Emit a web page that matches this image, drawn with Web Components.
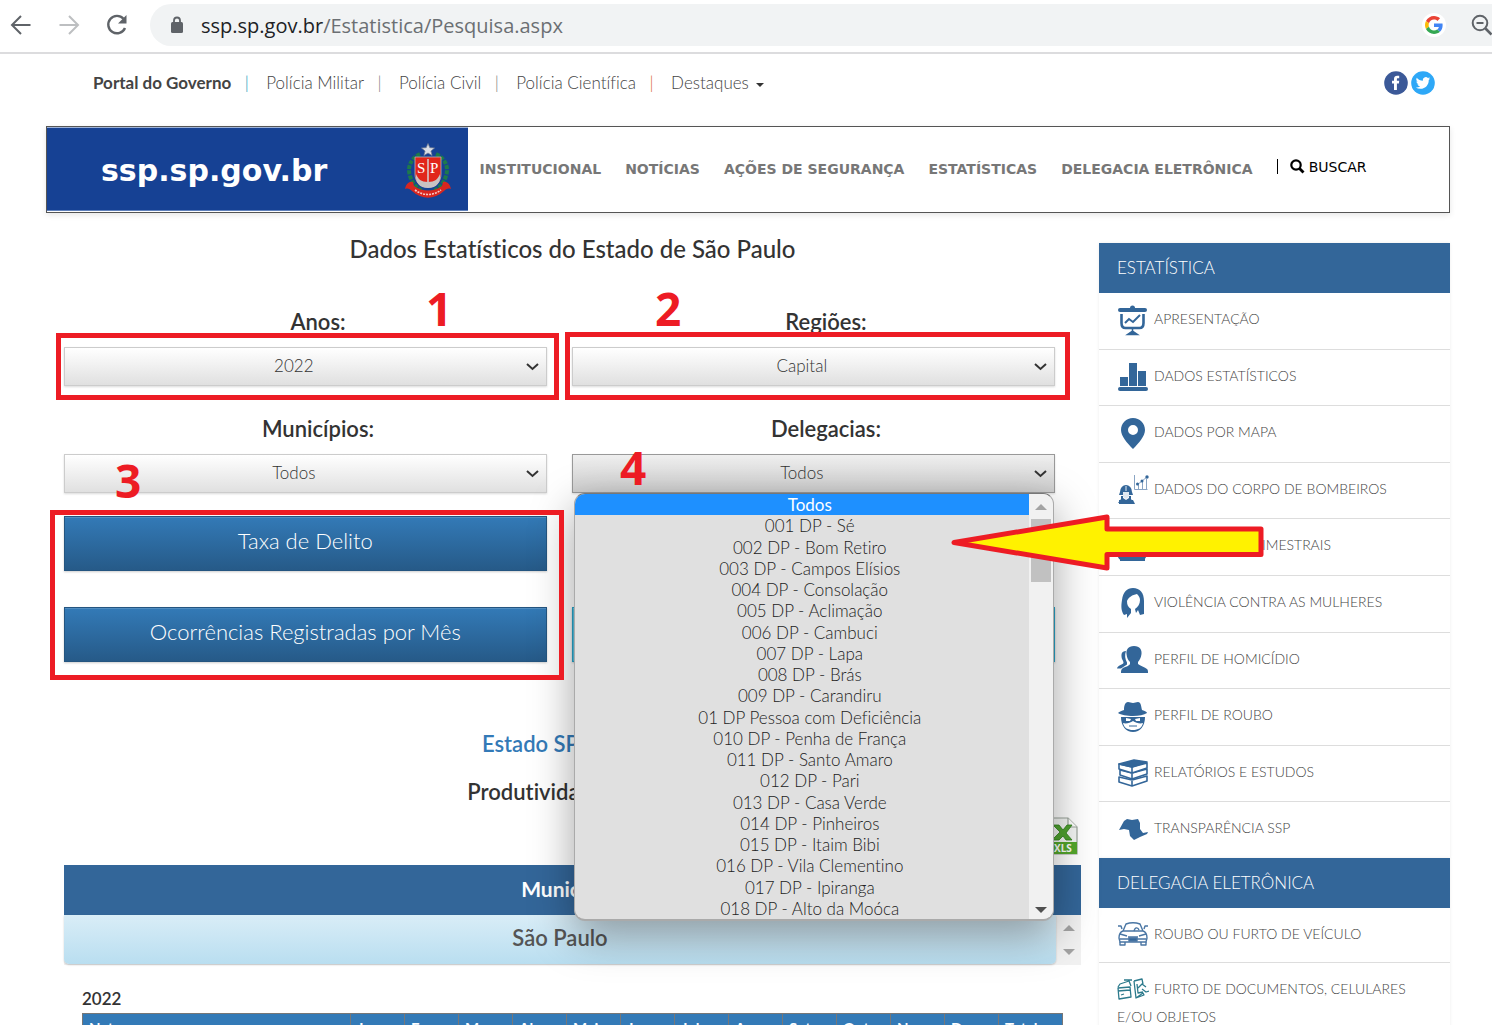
<!DOCTYPE html>
<html lang="pt-BR">
<head>
<meta charset="utf-8">
<title>Dados Estatísticos do Estado de São Paulo</title>
<style>
  html, body { margin: 0; height: 100%; overflow: hidden; background: #fff; }
  body { font-family: Lato, "Open Sans", sans-serif; color: #333; font-variant-ligatures: none; }
</style>
</head>
<body>
<ssp-page></ssp-page>
<script>
const define = (name, html, setup) => {
  const t = document.createElement('template');
  t.innerHTML = html;
  customElements.define(name, class extends HTMLElement {
    constructor() {
      super();
      this.attachShadow({ mode: 'open' }).append(t.content.cloneNode(true));
    }
    connectedCallback() { if (setup && !this.ready) { this.ready = true; setup(this, this.shadowRoot); } }
  });
};

/* Browser toolbar */
define('browser-bar', `
<style>
  :host { display: flex; align-items: center; height: 52px; border-bottom: 2px solid #dcdcde; overflow: hidden; background: #fff; }
  .nav { display: flex; flex: none; gap: 24px; padding: 0 21px 2px 9px; }
  button { border: 0; padding: 0; background: none; display: block; width: 24px; height: 24px; }
  svg { display: block; }
  .pill { flex: 1; display: flex; align-items: center; height: 42px; margin: -2px -40px 0 0; padding-right: 39px; border-radius: 21px; background: #f1f3f4; }
  .lock { flex: none; margin: 0 17px 0 20px; }
  .url { flex: 1; font: 20px/28px "Open Sans", sans-serif; color: #6b6f73; padding-top: 2px; }
  .url b { font-weight: 400; color: #202124; }
  .g { width: 24px; height: 24px; border-radius: 50%; background: #fff; display: grid; place-items: center; margin-right: 25px; }
</style>
<div class="nav">
  <button aria-label="Voltar"><svg width="24" height="24" viewBox="0 0 24 24" fill="none" stroke="#5f6368" stroke-width="2"><path d="M21.500 12H3M12 3l-9 9 9 9"/></svg></button>
  <button aria-label="Avançar"><svg width="24" height="24" viewBox="0 0 24 24" fill="none" stroke="#bdbfc1" stroke-width="2"><path d="M2.500 12H21M12 3l9 9-9 9"/></svg></button>
  <button aria-label="Recarregar"><svg width="24" height="24" viewBox="0 0 24 24"><path d="M20 15a8.700 8.700 0 1 1-1.500-9.200" fill="none" stroke="#5f6368" stroke-width="2.400"/><path d="M21.500 2v8.500H13z" fill="#5f6368"/></svg></button>
</div>
<div class="pill">
  <svg class="lock" width="14" height="18" viewBox="0 0 14 18"><rect x="1" y="6" width="12" height="11" rx="1.500" fill="#5f6368"/><path d="M4 7V4.500a3 3 0 0 1 6 0V7" fill="none" stroke="#5f6368" stroke-width="1.800"/></svg>
  <span class="url"><b>ssp.sp.gov.br</b>/Estatistica/Pesquisa.aspx</span>
  <span class="g"><svg width="18" height="18" viewBox="0 0 48 48"><path fill="#EA4335" d="M24 9.500c3.540 0 6.710 1.220 9.210 3.600l6.850-6.850C35.900 2.380 30.470 0 24 0 14.620 0 6.510 5.380 2.560 13.220l7.980 6.190C12.430 13.720 17.740 9.500 24 9.500z"/><path fill="#4285F4" d="M46.980 24.550c0-1.570-.15-3.090-.38-4.550H24v9.020h12.940c-.58 2.960-2.260 5.480-4.780 7.180l7.730 6c4.510-4.180 7.090-10.360 7.090-17.650z"/><path fill="#FBBC05" d="M10.530 28.590c-.48-1.450-.76-2.990-.76-4.590s.27-3.140.76-4.590l-7.980-6.190C.92 16.460 0 20.120 0 24s.92 7.540 2.560 10.780z"/><path fill="#34A853" d="M24 48c6.480 0 11.930-2.130 15.890-5.810l-7.730-6c-2.150 1.450-4.920 2.300-8.160 2.300-6.260 0-11.570-4.220-13.470-9.910l-7.980 6.190C6.510 42.620 14.620 48 24 48z"/></svg></span>
  <svg width="22" height="22" viewBox="0 0 22 22" fill="none" stroke="#5f6368" stroke-width="2"><circle cx="9" cy="9" r="7.300"/><path d="M5.500 9h7"/><path d="M14.500 14.500l6 6" stroke-width="2.600"/></svg>
</div>`);

/* Government links */
define('top-links', `
<style>
  :host { display: flex; align-items: center; justify-content: space-between; height: 26px; padding: 16px 15px 0 47px; font-size: 17px; line-height: 24px; }
  nav { display: flex; }
  a { color: #444; text-decoration: none; font-weight: 300; }
  a.b { font-weight: 700; }
  .s { width: 35px; box-sizing: border-box; padding-right: 4px; text-align: center; color: #777; font-weight: 300; }
  .o { color: #d8601f; }
  .t { color: #0a9ab8; }
  .c { display: inline-block; border: 4px solid transparent; border-top-color: #333; border-bottom: 0; margin: 0 0 2px 7px; }
  .soc { display: flex; gap: 3px; }
  svg { display: block; }
</style>
<nav>
  <a class="b" href="#">Portal do Governo</a><span class="s t">|</span>
  <a href="#">Polícia Militar</a><span class="s">|</span>
  <a href="#">Polícia Civil</a><span class="s">|</span>
  <a href="#">Polícia Científica</a><span class="s o">|</span>
  <a href="#">Destaques<span class="c"></span></a>
</nav>
<div class="soc">
  <a href="#" aria-label="Facebook"><svg width="24" height="24" viewBox="0 0 24 24"><circle cx="12" cy="12" r="11.800" fill="#3b5998"/><path fill="#fff" d="M10 19v-6.500H8V9.800h2V8c0-2.300 1.300-3.300 3.200-3.300h2v2.600h-1.300c-.8 0-1 .4-1 1v1.500h2.300l-.3 2.700h-2V19z"/></svg></a>
  <a href="#" aria-label="Twitter"><svg width="24" height="24" viewBox="0 0 24 24"><circle cx="12" cy="12" r="11.800" fill="#2ea8f7"/><path fill="#fff" transform="translate(4.800 4.800) scale(.6)" d="M23.950 4.570a10 10 0 0 1-2.820.77 4.960 4.960 0 0 0 2.160-2.720c-.95.550-2 .950-3.130 1.190a4.920 4.920 0 0 0-8.380 4.480C7.690 8.090 4.070 6.130 1.640 3.160a4.920 4.920 0 0 0 1.520 6.570 4.900 4.900 0 0 1-2.230-.61v.06a4.920 4.920 0 0 0 3.950 4.830 5 5 0 0 1-2.210.080 4.940 4.940 0 0 0 4.600 3.420A9.870 9.870 0 0 1 0 19.540a14 14 0 0 0 7.550 2.210c9.050 0 14-7.500 14-13.980 0-.210 0-.420-.02-.630a9.940 9.940 0 0 0 2.460-2.550z"/></svg></a>
</div>`);

/* Banner with the main menu */
define('site-header', `
<style>
  :host { display: flex; height: 85px; margin-top: 30px; border: 1px solid #555; box-shadow: 0 2px 6px rgba(0,0,0,.1); background: #fff; }
  .logo { flex: none; box-sizing: border-box; width: 30%; height: 84px; display: flex; align-items: center; justify-content: space-between; padding: 3px 16px 0 54px; background: #164194; border-top: 1px solid #9db2d8; border-bottom: 1px solid #5f80bb; color: #fff; text-decoration: none; }
  .logo b { font: 700 30px/40px "DejaVu Sans", sans-serif; }
  .logo svg { display: block; }
  nav { display: flex; align-items: center; gap: 24px; padding: 0 0 2px 12px; font: 700 14px/20px "DejaVu Sans", sans-serif; white-space: nowrap; }
  nav a { color: #777; text-decoration: none; }
  .find { display: flex; align-items: center; margin-bottom: 4px; border: 0; padding: 0; background: none; color: #000; font: 14px/16px "DejaVu Sans", sans-serif; }
  .find i { width: 1px; height: 15px; background: #000; margin-right: 12px; }
  .find svg { margin-right: 4px; }
</style>
<a class="logo" href="#"><b>ssp.sp.gov.br</b>
  <svg width="48" height="56" viewBox="0 0 48 56">
    <g fill="none" stroke="#1d7a4b" stroke-width="4" stroke-dasharray="4 1.200"><path d="M16 11C7 15 3 24 6 33s8 13 14 16"/><path d="M32 11c9 4 13 13 10 22s-8 13-14 16"/></g>
    <path d="M11 14h26v17c0 8-5 13-13 13s-13-5-13-13z" fill="#e1251b" stroke="#b9b4b4" stroke-width=".8"/>
    <path d="M12 31c2 5 5 8 12 8s10-3 12-8c1 8-3 14-12 14S11 39 12 31z" fill="#c9c3c3"/>
    <path d="M24 16v23" stroke="#e8dede" stroke-width="1.800"/><path d="M24 16v23" stroke="#a33" stroke-width=".5"/>
    <text x="13" y="30" font-family="Liberation Serif, serif" font-size="15" fill="#fff">S</text>
    <text x="26" y="30" font-family="Liberation Serif, serif" font-size="15" fill="#fff">P</text>
    <path d="M24 .5l1.800 4.200 4.700.3-3.600 3 1.200 4.500L24 10l-4.100 2.500 1.200-4.500-3.600-3 4.700-.3z" fill="#d9dde6" stroke="#777f90" stroke-width=".7"/>
    <path d="M1 46c1-5 4-8 8-7l1 4c8 6 20 6 28 0l1-4c4-1 7 2 8 7-3-1-5 0-7 2-10 9-22 9-32 0-2-2-4-3-7-2z" fill="#d8261f"/>
    <path d="M11 47c8 6 18 6 26 0" fill="none" stroke="#f6c9c6" stroke-width="1.600" stroke-dasharray="2 1"/>
  </svg>
</a>
<nav>
  <a href="#">INSTITUCIONAL</a><a href="#">NOTÍCIAS</a><a href="#">AÇÕES DE SEGURANÇA</a><a href="#">ESTATÍSTICAS</a><a href="#">DELEGACIA ELETRÔNICA</a>
  <button class="find"><i></i><svg width="15" height="15" viewBox="0 0 15 15" fill="none" stroke="#000"><circle cx="6" cy="6" r="4.700" stroke-width="2.200"/><path d="M9.500 9.500l4 4" stroke-width="2.800"/></svg>BUSCAR</button>
</nav>`);

/* Labelled drop-down; a popup can be passed in */
define('field-select', `
<style>
  :host { display: block; }
  label { display: block; text-align: center; font-size: 22px; line-height: 24px; font-weight: 600; margin-bottom: 13px; }
  .box { position: relative; width: 95%; display: grid; align-items: center; }
  select { grid-area: 1/1; appearance: none; width: 100%; height: 39px; margin: 0; border: 1px solid #ccc; border-radius: 0; padding: 0 23px 2px 0; text-align: center; text-align-last: center; font: 300 17px/24px Lato, sans-serif; color: #333; background: linear-gradient(#fff, #e0e0e0); box-shadow: 0 1px 2px rgba(0,0,0,.15); }
  :host([open]) select { border-color: #999; background: linear-gradient(#efefef, #cfcfcf); }
  svg { grid-area: 1/1; justify-self: end; margin-right: 8px; pointer-events: none; }
  ::slotted(*) { position: absolute; z-index: 5; top: 100%; left: 2px; right: 1px; }
</style>
<label for="s"></label>
<div class="box">
  <select id="s"><option></option></select>
  <svg width="13" height="8" viewBox="0 0 13 8" fill="none" stroke="#333" stroke-width="2"><path d="M1 1l5.500 5L12 1"/></svg>
  <slot></slot>
</div>`, (el, r) => {
  r.querySelector('label').textContent = el.getAttribute('label');
  r.querySelector('option').textContent = el.getAttribute('value');
});

/* Open list of options */
define('option-popup', `
<style>
  :host { display: flex; box-sizing: border-box; height: 428px; border: 2px solid #aaa; border-width: 1px 1px 2px; border-top-color: #777; border-radius: 11px; overflow: hidden; background: #e0e0e0; box-shadow: 0 14px 44px rgba(0,0,0,.36); }
  ul { flex: 1; display: flex; flex-direction: column; margin: 0; padding: 0; list-style: none; text-align: center; font-size: 17px; font-weight: 300; line-height: 21px; color: #222; }
  li { flex: 1; padding-left: 16px; }
  li[aria-selected] { background: #1e90ff; color: #fff; font-weight: 400; }
  .bar { width: 20px; display: flex; flex-direction: column; align-items: center; background: #f1f1f1; padding: 10px 2px 6px; }
  .up, .dn { border: 6px solid transparent; }
  .up { border-top: 0; border-bottom-color: #a3a3a3; }
  .dn { border-bottom: 0; border-top-color: #505050; margin-top: auto; }
  .th { align-self: stretch; height: 63px; margin-top: 9px; background: #c1c1c1; }
</style>
<ul role="listbox"></ul>
<div class="bar"><span class="up"></span><span class="th"></span><span class="dn"></span></div>`, (el, r) => {
  const ul = r.querySelector('ul');
  el.getAttribute('items').split('|').forEach((t, i) => {
    const li = document.createElement('li');
    li.setAttribute('role', 'option');
    if (!i) li.setAttribute('aria-selected', 'true');
    li.textContent = t;
    ul.append(li);
  });
});

define('action-button', `
<style>
  :host { display: block; width: 95%; }
  button { display: block; width: 100%; height: 55px; border: 1px solid #245580; padding: 0 0 5px; background: linear-gradient(#337ab7, #265a88); box-shadow: inset 0 1px 0 rgba(255,255,255,.15), 0 1px 2px rgba(0,0,0,.2); color: #fff; font: 300 22px/28px Lato, sans-serif; }
  :host([info]) button { border-color: #28a4c9; background: #5bc0de; }
</style>
<button><slot></slot></button>`, (el, r) => {
  if (el.hasAttribute('name')) r.querySelector('button').setAttribute('aria-label', el.getAttribute('name'));
});

/* Side menu */
define('side-menu', `
<style>
  :host { display: block; box-shadow: 0 0 3px rgba(0,0,0,.08); background: #fff; }
  h2 { margin: 0; padding: 0 18px; font-size: 17px; font-weight: 300; line-height: 50px; background: #369; color: #fff; }
  .list { display: flex; flex-direction: column; min-height: var(--list, 0); }
</style>
<h2></h2><div class="list"><slot></slot></div>`, (el, r) => { r.querySelector('h2').textContent = el.getAttribute('heading'); });

define('menu-item', `
<style>
  :host { display: block; flex: 1; box-sizing: border-box; min-height: 55px; padding: 12px 18px 0; border-bottom: 1px solid #ddd; }
  :host(:last-child) { border-bottom: 0; }
  a { display: block; color: #444; text-decoration: none; font-size: 14px; font-weight: 300; line-height: 28px; }
  ::slotted(svg) { width: 32px; height: 32px; vertical-align: middle; margin: -4px 5px -4px 0; }
</style>
<a href="#"><slot></slot></a>`);

/* Markup notes drawn over the page */
define('page-notes', `
<style>
  :host { position: absolute; inset: 0; z-index: 10; pointer-events: none; overflow: hidden; font: 700 46px/46px "Open Sans", sans-serif; color: #ed1c24; }
  .n, .r, svg { position: absolute; }
  .r { box-sizing: border-box; border: 5px solid #ed1c24; }
</style>
<div class="r" style="left:56px;top:333px;width:503px;height:67px"></div>
<div class="r" style="left:565px;top:332px;width:505px;height:68px"></div>
<div class="r" style="left:50px;top:510px;width:514px;height:170px"></div>
<span class="n" style="left:426px;top:285px">1</span>
<span class="n" style="left:655px;top:285px">2</span>
<span class="n" style="left:115px;top:457px">3</span>
<span class="n" style="left:620px;top:444px">4</span>
<svg style="left:945px;top:508px" width="324" height="70" viewBox="945 508 324 70"><path d="M954 542.500L1107 517v12h154v25.500h-154V568z" fill="#fff200" stroke="#ed1c24" stroke-width="5" stroke-linejoin="round"/></svg>`);

/* Monthly table */
define('month-table', `
<style>
  :host { display: block; padding: 0 18px; }
  table { width: 100%; border-collapse: collapse; table-layout: fixed; font-size: 15px; line-height: 20px; }
  caption { text-align: left; font-size: 17px; font-weight: 600; line-height: 24px; padding-bottom: 2px; }
  th { background: #337ab7; color: #fff; border: 1px solid #777; padding: 4px 6px; text-align: left; font-weight: 700; }
  th:first-child { width: 255px; }
  th:last-child { width: 51px; }
</style>
<table><caption>2022</caption><thead><tr></tr></thead></table>`, (el, r) => {
  'Natureza Jan Fev Mar Abr Mai Jun Jul Ago Set Out Nov Dez Total'.split(' ').forEach(t => {
    const th = document.createElement('th'); th.scope = 'col'; th.textContent = t; r.querySelector('tr').append(th);
  });
});

define('ssp-page', `
<style>
  :host { display: block; position: relative; height: 100%; overflow: hidden; }
  .wrap { padding: 0 42px 0 46px; }
  .cols { display: flex; gap: 18px; }
  main { flex: 1; min-width: 0; padding-left: 18px; }
  aside { flex: 0 0 25%; padding-top: 30px; }
  h1 { margin: 21px 0 0; font-size: 24px; line-height: 30px; font-weight: 500; text-align: center; }
  .grid { display: grid; grid-template-columns: 1fr 1fr; margin: 46px 1px 0 0; row-gap: 31px; }
  .btns { margin-top: 23px; row-gap: 36px; }
  .btns :last-child { grid-column: 2; }
  h2 { margin: 67px 0 0; font-size: 22px; line-height: 30px; font-weight: 600; text-align: center; color: #337ab7; }
  h3 { margin: 18px 0 0; font-size: 22px; line-height: 30px; font-weight: 600; text-align: center; }
  .xls { display: block; width: 37px; margin: 10px 3px 10px auto; }
  .xls svg { display: block; }
  .cap { background: #369; color: #fff; text-align: center; font-size: 21px; font-weight: 700; line-height: 48px; padding-bottom: 2px; }
  .row { display: flex; height: 50px; background: #f1f1f1; margin-bottom: 22px; }
  .city { flex: 1; text-align: center; font-size: 22px; font-weight: 600; line-height: 45px; height: 49px; color: #555; border-radius: 0 0 5px 5px; background: linear-gradient(#d9edf7, #b9def0); box-shadow: 0 1px 2px rgba(0,0,0,.2); }
  .sb { width: 25px; display: flex; flex-direction: column; align-items: center; justify-content: space-between; padding: 10px 0; box-sizing: border-box; }
  .sb i { border: 6px solid transparent; border-top: 0; border-bottom-color: #a3a3a3; }
  .sb i + i { border-bottom: 0; border-top: 6px solid #a3a3a3; }
</style>
<browser-bar></browser-bar>
<div class="wrap">
  <top-links></top-links>
  <site-header></site-header>
  <div class="cols">
    <main>
      <h1>Dados Estatísticos do Estado de São Paulo</h1>
      <div class="grid">
        <field-select label="Anos:" value="2022"></field-select>
        <field-select label="Regiões:" value="Capital"></field-select>
        <field-select label="Municípios:" value="Todos"></field-select>
        <field-select label="Delegacias:" value="Todos" open>
          <option-popup items="Todos|001 DP - Sé|002 DP - Bom Retiro|003 DP - Campos Elísios|004 DP - Consolação|005 DP - Aclimação|006 DP - Cambuci|007 DP - Lapa|008 DP - Brás|009 DP - Carandiru|01 DP Pessoa com Deficiência|010 DP - Penha de França|011 DP - Santo Amaro|012 DP - Pari|013 DP - Casa Verde|014 DP - Pinheiros|015 DP - Itaim Bibi|016 DP - Vila Clementino|017 DP - Ipiranga|018 DP - Alto da Moóca"></option-popup>
        </field-select>
      </div>
      <div class="grid btns">
        <action-button>Taxa de Delito</action-button><span></span>
        <action-button>Ocorrências Registradas por Mês</action-button>
        <action-button info name="Produtividade Policial"></action-button>
      </div>
      <h2>Estado SP | Capital</h2>
      <h3>Produtividade Policial</h3>
      <a class="xls" href="#" aria-label="Exportar XLS"><svg width="37" height="38" viewBox="0 0 37 38">
        <path d="M1 1h26l9 9v27H1z" fill="#f4f6f4" stroke="#9aa39a" stroke-width="1.200"/><path d="M27 1v9h9" fill="#fff" stroke="#9aa39a" stroke-width="1.200"/>
        <path d="M12 8h6l4 5 4-5h5l-6 8 6 7h-6l-3-4-4 4h-7l8-8z" fill="#4fa32f" stroke="#2f7d1b" stroke-width=".8"/>
        <path d="M1 25h35v12H1z" fill="#54a82c"/><text x="13" y="35" font-family="Open Sans, sans-serif" font-weight="700" font-size="10" fill="#fff">XLS</text></svg></a>
      <div class="cap">Municípios</div>
      <div class="row"><div class="city">São Paulo</div><div class="sb"><i></i><i></i></div></div>
      <month-table></month-table>
    </main>
    <aside>
      <side-menu heading="ESTATÍSTICA" style="--list:565px">
        <menu-item><svg viewBox="0 0 32 32" fill="none" stroke="#369"><path d="M3 5h25" stroke-width="4" stroke-linecap="round"/><circle cx="15.500" cy="3" r="2.500" fill="#369" stroke="none"/><path d="M4.500 9v9c0 3 1 5 4 5h14c3 0 4-2 4-5V9" stroke-width="2.600"/><path d="M8 18l4-4 4 3 7-7" stroke-width="2"/><path d="M15.500 24v2l-5 3.500h10l-5-3.500z" fill="#369" stroke-width="1.500"/></svg>APRESENTAÇÃO</menu-item>
        <menu-item><svg viewBox="0 0 32 32" fill="#369"><rect x="3" y="16" width="8" height="9"/><rect x="12" y="2" width="8" height="23"/><rect x="21" y="10" width="8" height="15"/><rect x="1" y="26" width="30" height="4" rx="2"/></svg>DADOS ESTATÍSTICOS</menu-item>
        <menu-item><svg viewBox="0 0 32 32" fill="#369"><path fill-rule="evenodd" d="M16 0c6.800 0 12 5 12 12 0 6-6 13-12 19C10 25 4 18 4 12 4 5 9.200 0 16 0zm0 7a5 5 0 1 0 0 10 5 5 0 0 0 0-10z"/></svg>DADOS POR MAPA</menu-item>
        <menu-item><svg viewBox="0 0 32 32" fill="#369"><path d="M3 18a6 7 0 0 1 12 0l1 3H2zM4 22h2v2l3 2 3-2v-2h2v3l3 4H1l3-4zM2 26h14l2 4H2z"/><path d="M6 18h6v5l-3 2-3-2z" fill="#dfe8f1"/><path d="M9 12v5" stroke="#dfe8f1"/><path d="M17.500 1v14.500h13M21.500 15v-4M25.500 15V7M29.500 15V5" fill="none" stroke="#8aa5c4"/><path d="M20 11l5-4 5-4" fill="none" stroke="#8aa5c4"/><circle cx="20.500" cy="10" r="1.500"/><circle cx="25" cy="7" r="1.500"/><circle cx="30" cy="3" r="1.700"/></svg>DADOS DO CORPO DE BOMBEIROS</menu-item>
        <menu-item><svg viewBox="0 0 32 32" fill="none" stroke="#369"><rect x="2" y="2" width="26" height="26" rx="4" stroke-width="3"/><path d="M3 28h25" stroke-width="4"/></svg>ESTATÍSTICAS TRIMESTRAIS</menu-item>
        <menu-item><svg viewBox="0 0 32 32" fill="#369"><path d="M16 1c7 0 11 5 11 13v13l-4 1-2-5-2 3-1-4c3-2 5-5 5-9 0-2-1-4-3-6-5 1-8 3-10 7 0 4 1 6 4 8v4l-4 5 0-4-3 1C4 24 4 19 5 13 6 5 10 1 16 1z"/></svg>VIOLÊNCIA CONTRA AS MULHERES</menu-item>
        <menu-item><svg viewBox="0 0 32 32" fill="#369"><path d="M17 2c6 0 8 4 7.500 8-.5 4-2 6-3.500 8v2c2 2 7 3 9 5 1 1 1 2 1 4H4c0-2 0-4 2-5 2-1 6-2 7-4v-2c-2-2-3-4-3.500-8C9 6 11 2 17 2z"/><path d="M9 7c-5 0-5 4-4 8 .5 1 1.500 2 1.500 4C5 21 1 21 0 24.500h4l6-4v-2C8 15 7.500 11 9 7z"/></svg>PERFIL DE HOMICÍDIO</menu-item>
        <menu-item><svg viewBox="0 0 32 32" fill="#369"><path d="M7 9c0-4 1-8 4-8 2 0 3 1 5 1s3-1 5-1c3 0 3 4 4 8 3 1 5 2 5 3-3 2-8 3-14 3S4 14 1 12c1-1 3-2 6-3z"/><path d="M4 16h24c0 9-5 15-12 15S4 25 4 16z"/><path d="M6 22c3 1 7 0 10-2 3 2 7 3 10 2-1 5-5 7-10 7S7 27 6 22zM9 17l5 1-1 2H9zm14 0l-5 1 1 2h4z" fill="#fff"/><path d="M12 25h8" stroke="#369"/></svg>PERFIL DE ROUBO</menu-item>
        <menu-item><svg viewBox="0 0 32 32" fill="#fff" stroke="#369" stroke-width="1.600" stroke-linejoin="round"><path d="M2 20l13 3 15-4v5l-15 5-13-4z"/><path d="M3 13l12 3 15-4v5l-15 5-12-4z"/><path d="M2 7l13 3 15-4v5l-15 5-13-4z"/><path d="M2 7l15-4 13 2-15 5z" fill="#369"/><path d="M15 10v6m0 1v5m0 2v5" fill="none"/></svg>RELATÓRIOS E ESTUDOS</menu-item>
        <menu-item><svg viewBox="0 0 32 32" fill="#369"><path d="M2 16l5-9 3-2 5 1 6-1 2 4v6l3 4 5-1-1 2-7 3-6 3-4-4-1-6-5-1z"/></svg>TRANSPARÊNCIA SSP</menu-item>
      </side-menu>
      <side-menu heading="DELEGACIA ELETRÔNICA">
        <menu-item><svg viewBox="0 0 32 32" fill="none" stroke="#4a76a4" stroke-width="1.400" stroke-linejoin="round"><path d="M6 11l3-7c4-1.500 10-1.500 14 0l3 7M6 11h20c3 1 4 4 4 7l-1 4H3l-1-4c0-3 1-6 4-7z"/><path d="M1 6h3l1 3M31 6h-3l-1 3M17 11c1-4 4-4 5-1M3 14l7 2m19-2l-7 2M11 17h10M3 19h26"/><path d="M3 22v3h5v-3m16 0v3h5v-3"/><path d="M12 18h8v3h-8z" fill="#369"/></svg>ROUBO OU FURTO DE VEÍCULO</menu-item>
        <menu-item><svg viewBox="0 0 32 32" fill="none" stroke="#2c7a8c" stroke-width="1.300" stroke-linejoin="round"><path d="M1 13l12-1 1 10-12 2zM1 16l12-1M4 20l3-1M1 12l2-3 9-3 2 5M7 5h8M17 6l8-2 1 5M26 18l1 2-8 3zM17 6l2 17M20 9l1 9 5-1M21 13l4-4 4 3M25 14l4 3 3-1"/></svg>FURTO DE DOCUMENTOS, CELULARES E/OU OBJETOS</menu-item>
      </side-menu>
    </aside>
  </div>
</div>
<page-notes></page-notes>`);
</script>
</body>
</html>
